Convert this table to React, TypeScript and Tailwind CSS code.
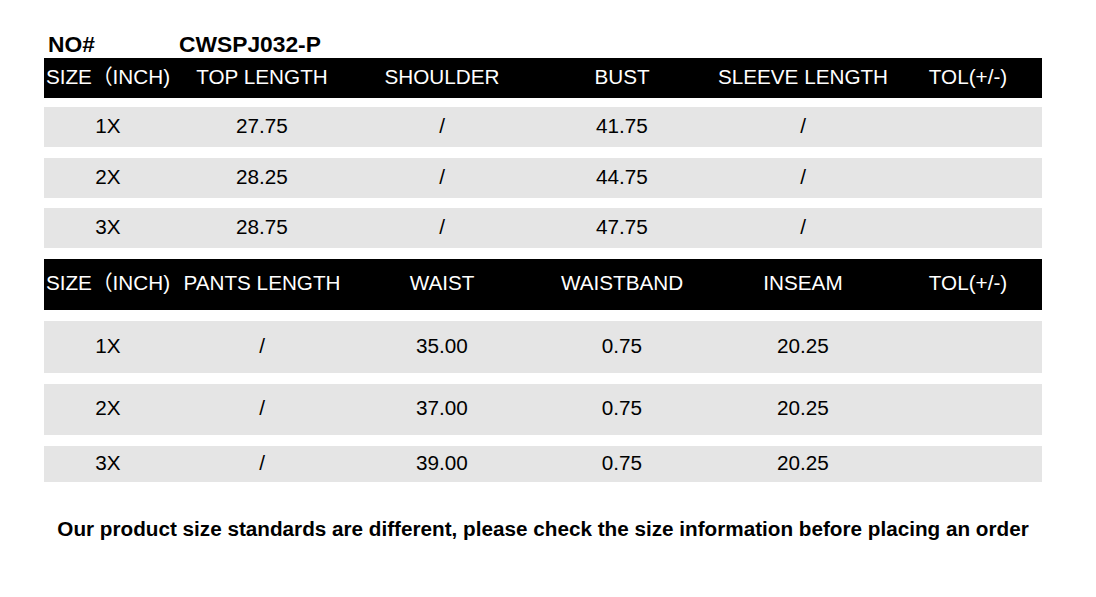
const font = { fontFamily: '"Liberation Sans", Arial, "Noto Sans CJK SC", sans-serif' };

const cols = 'grid grid-cols-[128px_180px_180px_180px_182px_148px]';

const topHead = ['SIZE（INCH)', 'TOP LENGTH', 'SHOULDER', 'BUST', 'SLEEVE LENGTH', 'TOL(+/-)'];
const topRows = [
    ['1X', '27.75', '/', '41.75', '/', ''],
    ['2X', '28.25', '/', '44.75', '/', ''],
    ['3X', '28.75', '/', '47.75', '/', ''],
];
const pantsHead = ['SIZE（INCH)', 'PANTS LENGTH', 'WAIST', 'WAISTBAND', 'INSEAM', 'TOL(+/-)'];
const pantsRows = [
    ['1X', '/', '35.00', '0.75', '20.25', ''],
    ['2X', '/', '37.00', '0.75', '20.25', ''],
    ['3X', '/', '39.00', '0.75', '20.25', ''],
];

function Row({ cells, dark, className }: { cells: string[]; dark?: boolean; className: string }) {
    return (
        <div className={`${cols} pb-[2px] ${dark ? 'bg-black text-white' : 'bg-[#e5e5e5] text-black'} ${className}`}>
            {cells.map((c, i) => (
                <div key={i} className="flex items-center justify-center whitespace-nowrap text-[20.7px] leading-none">
                    {c}
                </div>
            ))}
        </div>
    );
}

export default function App() {
    return (
        <main className="bg-white w-[1096px] h-[597px] pl-[44px] pt-[33px]" style={font}>
            <div className="flex h-[22px] items-center font-bold text-[22.8px] leading-[22px] text-black">
                <span className="pl-[4px] w-[135px]">NO#</span>
                <span>CWSPJ032-P</span>
            </div>
            <div className="w-[998px] flex flex-col mt-[3px]">
                <Row cells={topHead} dark className="h-[40px]" />
                <Row cells={topRows[0]} className="h-[40px] mt-[9px]" />
                <Row cells={topRows[1]} className="h-[40px] mt-[11px]" />
                <Row cells={topRows[2]} className="h-[40px] mt-[10px]" />
                <Row cells={pantsHead} dark className="h-[51px] mt-[11px]" />
                <Row cells={pantsRows[0]} className="h-[52px] mt-[11px]" />
                <Row cells={pantsRows[1]} className="h-[51px] mt-[11px]" />
                <Row cells={pantsRows[2]} className="h-[36px] mt-[11px]" />
                <p className="mt-[35px] text-center font-bold text-[20.7px] leading-[24px] text-black whitespace-nowrap">
                    Our product size standards are different, please check the size information before placing an order
                </p>
            </div>
        </main>
    );
}
